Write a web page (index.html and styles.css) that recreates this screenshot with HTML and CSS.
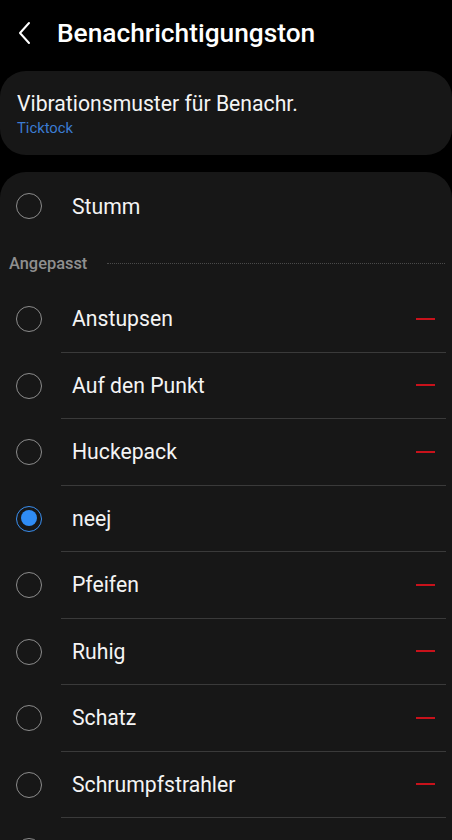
FILE: index.html
```html
<!DOCTYPE html>
<html lang="de">
<head>
<meta charset="utf-8">
<link rel="stylesheet" href="styles.css">
</head>
<body>
<header class="topbar">
  <svg class="back" viewBox="0 0 16 24" width="16" height="24"><path d="M12 2 L3 12 L12 22" fill="none" stroke="#fff" stroke-width="2" stroke-linecap="round" stroke-linejoin="round"/></svg>
  <h1 class="title">Benachrichtigungston</h1>
</header>

<section class="card pattern">
  <div class="pattern-title">Vibrationsmuster für Benachr.</div>
  <div class="pattern-sub">Ticktock</div>
</section>

<section class="card list">
  <div class="row first">
    <span class="radio"></span>
    <span class="label">Stumm</span>
  </div>
  <div class="section-head">
    <span class="section-title">Angepasst</span>
    <span class="dots"></span>
  </div>
  <div class="row"><span class="radio"></span><div class="row-body"><span class="label">Anstupsen</span><span class="minus"></span></div></div>
  <div class="row"><span class="radio"></span><div class="row-body"><span class="label">Auf den Punkt</span><span class="minus"></span></div></div>
  <div class="row"><span class="radio"></span><div class="row-body"><span class="label">Huckepack</span><span class="minus"></span></div></div>
  <div class="row"><span class="radio checked"></span><div class="row-body"><span class="label">neej</span></div></div>
  <div class="row"><span class="radio"></span><div class="row-body"><span class="label">Pfeifen</span><span class="minus"></span></div></div>
  <div class="row"><span class="radio"></span><div class="row-body"><span class="label">Ruhig</span><span class="minus"></span></div></div>
  <div class="row"><span class="radio"></span><div class="row-body"><span class="label">Schatz</span><span class="minus"></span></div></div>
  <div class="row"><span class="radio"></span><div class="row-body"><span class="label">Schrumpfstrahler</span><span class="minus"></span></div></div>
  <div class="row"><span class="radio"></span><div class="row-body"></div></div>
</section>
</body>
</html>
```
FILE: styles.css
```css
* { box-sizing: border-box; }
html, body { margin: 0; padding: 0; }
body {
  background: #000;
  color: #fafafa;
  font-family: Roboto, "Noto Sans", "Liberation Sans", sans-serif;
  width: 452px;
  height: 840px;
  overflow: hidden;
}
.topbar {
  height: 71px;
  display: flex;
  align-items: center;
  padding-left: 17px;
  padding-bottom: 6px;
}
.back { flex: none; }
.title {
  margin: 0 0 0 24px;
  font-size: 26.3px;
  font-weight: 500;
  color: #fff;
}
.card {
  background: #171717;
  border-radius: 26px;
}
.pattern {
  height: 84px;
  padding: 20px 17px 0;
}
.pattern-title {
  font-size: 21.2px;
  line-height: 26px;
  color: #f4f4f4;
}
.pattern-sub {
  font-size: 14.8px;
  line-height: 18px;
  color: #3b7bd2;
  margin-top: 2px;
}
.list {
  margin-top: 17px;
  height: 700px;
}
.row {
  display: flex;
  align-items: stretch;
  height: 66.5px;
}
.row.first {
  height: 68px;
  align-items: center;
}
.radio {
  flex: none;
  width: 26px;
  height: 26px;
  border: 1.5px solid #8c8c8c;
  border-radius: 50%;
  margin: 0 16px;
  align-self: center;
  position: relative;
}
.radio.checked {
  border: 1.5px solid #3a8ff0;
}
.radio.checked::after {
  content: "";
  position: absolute;
  left: 3.5px;
  top: 3.5px;
  width: 16px;
  height: 16px;
  border-radius: 50%;
  background: #2f8cf5;
}
.label {
  font-size: 21.2px;
  color: #f4f4f4;
}
.row.first .label { margin-left: 14px; }
.row-body {
  flex: 1;
  display: flex;
  align-items: center;
  justify-content: space-between;
  border-bottom: 1px solid #3a3a3a;
  margin-left: 3px;
  margin-right: 6px;
  padding-left: 11px;
  padding-right: 11px;
}
.minus {
  width: 19px;
  height: 2px;
  background: #c8121b;
}
.section-head {
  display: flex;
  align-items: center;
  height: 46px;
  padding: 0 7px 0 9px;
}
.section-title {
  font-size: 16.4px;
  font-weight: 500;
  color: #8f8f8f;
}
.dots {
  flex: 1;
  margin-left: 20px;
  height: 0;
  border-top: 1.5px dotted #4a4a4a;
}
```
